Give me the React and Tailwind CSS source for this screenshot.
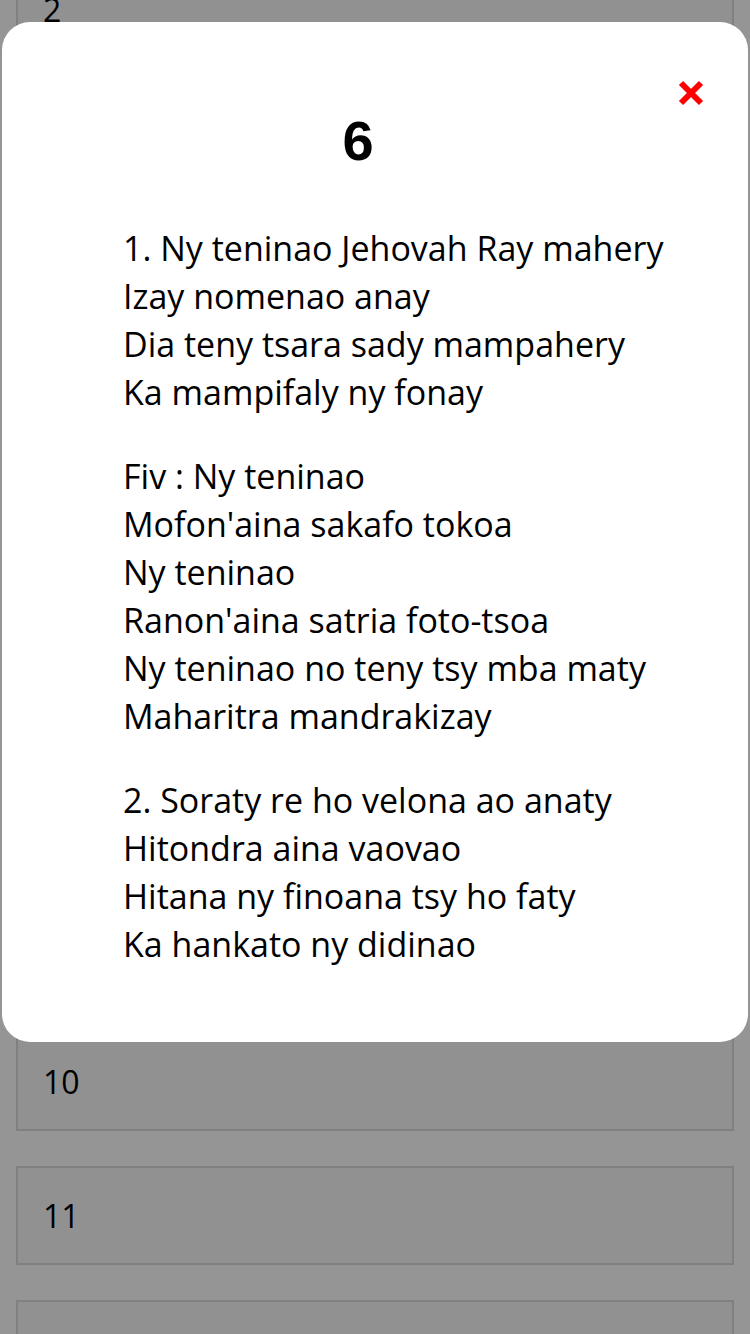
const stanzas = [
  [
    "1. Ny teninao Jehovah Ray mahery",
    "Izay nomenao anay",
    "Dia teny tsara sady mampahery",
    "Ka mampifaly ny fonay",
  ],
  [
    "Fiv : Ny teninao",
    "Mofon'aina sakafo tokoa",
    "Ny teninao",
    "Ranon'aina satria foto-tsoa",
    "Ny teninao no teny tsy mba maty",
    "Maharitra mandrakizay",
  ],
  [
    "2. Soraty re ho velona ao anaty",
    "Hitondra aina vaovao",
    "Hitana ny finoana tsy ho faty",
    "Ka hankato ny didinao",
  ],
];

const songs = Array.from({ length: 12 }, (_, i) => i + 2);

export default function App() {
  return (
    <div
      className="relative h-[1334px] overflow-hidden bg-white"
      style={{ fontFamily: '"Open Sans", "Noto Sans", sans-serif' }}
    >
      {/* list behind the modal */}
      <div className="-mt-[40px] flex flex-col gap-[35px] px-4">
        {songs.map((n) => (
          <div
            key={n}
            className="flex h-[99px] items-center border-2 border-[#dcdcdc] bg-[#f8f8f8] px-[25px] text-[32px] text-black"
          >
            {n}
          </div>
        ))}
      </div>

      {/* overlay */}
      <div className="absolute inset-0 bg-black/[0.415]">
        <div className="absolute left-[2px] right-[2px] top-[22px] h-[1020px] rounded-[28px] bg-white">
          <button className="absolute right-[43px] top-[57px] leading-none">
            <svg width="28" height="28" viewBox="0 0 28 28">
              <path d="M4 4 L24 24 M24 4 L4 24" stroke="#ff0000" strokeWidth="6" />
            </svg>
          </button>

          <h1
            className="pr-[34px] pt-[87px] text-center text-[56px] font-bold leading-[64px] text-black"
            style={{ fontFamily: '"Liberation Sans", Arial, sans-serif' }}
          >
            6
          </h1>

          <div className="mt-[51px] flex flex-col gap-[36px] pl-[121px] text-[34px] leading-[48px] text-black">
            {stanzas.map((lines, i) => (
              <div key={i}>
                {lines.map((l) => (
                  <div key={l}>{l}</div>
                ))}
              </div>
            ))}
          </div>
        </div>
      </div>
    </div>
  );
}
